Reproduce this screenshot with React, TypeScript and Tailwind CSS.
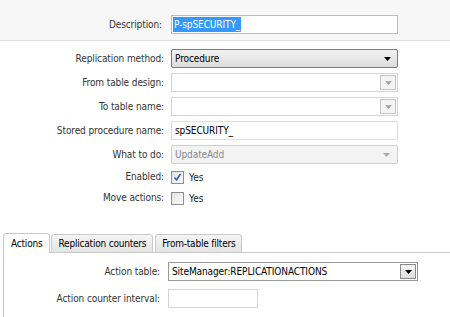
import React from "react";

const font = { fontFamily: '"DejaVu Sans Condensed", Tahoma, "Liberation Sans", sans-serif' };

const Caret = ({ color = "#000" }: { color?: string }) => (
  <svg width="7" height="4" viewBox="0 0 7 4">
    <path d="M0 0h7L3.5 4z" fill={color} />
  </svg>
);

const Label = ({ children }: { children: React.ReactNode }) => (
  <div className="text-right text-[10px] tracking-[-0.1px] text-[#333] leading-none">{children}</div>
);

const ComboEmpty = () => (
  <div className="h-[19px] w-[227px] flex border border-[#d4d4d4] bg-white">
    <div className="flex-1" />
    <div className="w-[16px] bg-[#f4f4f4] flex items-center justify-center m-[1px] border border-[#c4c4c4]">
      <Caret color="#a8a8a8" />
    </div>
  </div>
);

const Check = ({ checked }: { checked?: boolean }) => (
  <div className="flex items-center gap-[5px]">
    <div className="w-[13px] h-[13px] border border-[#8f8f8f] bg-gradient-to-br from-[#e0e0e0] to-white flex items-center justify-center">
      {checked && (
        <svg width="9" height="9" viewBox="0 0 9 9">
          <path d="M1.5 4.5l2 2.5 4-6" stroke="#3a5fb0" strokeWidth="1.6" fill="none" />
        </svg>
      )}
    </div>
    <span className="text-[10px] text-[#222]">Yes</span>
  </div>
);

const tabText = "text-[10px] tracking-[-0.2px] text-black";

export default function App() {
  return (
    <div className="w-[450px] h-[317px] bg-white overflow-hidden" style={font}>
      <div className="h-[41px] bg-[#f7f7f7] border-b border-[#e2e2e2] pt-[15px]">
        <div className="grid grid-cols-[162px_227px] gap-x-[9px] items-center">
          <Label>Description:</Label>
          <div className="h-[19px] border border-[#9cc3ec] bg-white flex items-center px-[1px]">
            <span className="bg-[#3399ff] text-white text-[10px] tracking-[-0.1px] leading-[15px] px-[1px]">P-spSECURITY_</span>
          </div>
        </div>
      </div>

      <div className="grid grid-cols-[164px_227px] gap-x-[7px] gap-y-[5px] items-center mt-[8px]">
        <Label>Replication method:</Label>
        <div className="h-[19px] rounded-[2px] border border-[#7a7a7a] bg-gradient-to-b from-[#f2f2f2] to-[#dcdcdc] flex items-center justify-between pl-[3px] pr-[6px]">
          <span className="text-[10px] tracking-[-0.1px] text-black">Procedure</span>
          <Caret />
        </div>

        <Label>From table design:</Label>
        <ComboEmpty />

        <Label>To table name:</Label>
        <ComboEmpty />

        <Label>Stored procedure name:</Label>
        <div className="h-[19px] border border-[#dedede] bg-white flex items-center px-[3px]">
          <span className="text-[10px] tracking-[-0.1px] text-black">spSECURITY_</span>
        </div>

        <Label>What to do:</Label>
        <div className="h-[19px] rounded-[2px] border border-[#cfcfcf] bg-[#f3f3f3] flex items-center justify-between pl-[3px] pr-[7px]">
          <span className="text-[10px] tracking-[-0.1px] text-[#8a8a8a]">UpdateAdd</span>
          <Caret color="#aaa" />
        </div>

        <div className="h-[16px] flex items-center justify-end"><Label>Enabled:</Label></div>
        <Check checked />

        <div className="h-[16px] flex items-center justify-end"><Label>Move actions:</Label></div>
        <Check />
      </div>

      <div className="mt-[27px] flex items-end pl-[3px] h-[20px]">
        <div className={`h-[20px] px-[7px] border border-b-0 border-[#c8c8c8] bg-white rounded-t-[3px] flex items-center relative z-10 ${tabText}`}>
          Actions
        </div>
        <div className={`h-[19px] px-[6px] ml-[1px] border border-[#c8c8c8] bg-gradient-to-b from-[#f5f5f5] to-[#e4e4e4] rounded-t-[3px] flex items-center ${tabText}`}>
          Replication counters
        </div>
        <div className={`h-[19px] px-[6px] ml-[2px] border border-[#c8c8c8] bg-gradient-to-b from-[#f5f5f5] to-[#e4e4e4] rounded-t-[3px] flex items-center ${tabText}`}>
          From-table filters
        </div>
        <div className="flex-1 border-b border-[#c8c8c8]" />
      </div>
      <div className="ml-[3px] border-l border-t border-[#c8c8c8] -mt-[1px] h-[80px] bg-white">
        <div className="grid grid-cols-[156px_250px] gap-x-[8px] gap-y-[8px] items-center mt-[9px]">
          <Label>Action table:</Label>
          <div className="h-[19px] border border-[#9a9a9a] bg-white flex items-center justify-between pl-[3px] pr-[1px]">
            <span className="text-[10px] tracking-[-0.1px] text-black">SiteManager:REPLICATIONACTIONS</span>
            <div className="w-[16px] h-[15px] border border-[#8a8a8a] bg-gradient-to-b from-[#f4f4f4] to-[#dedede] flex items-center justify-center">
              <Caret />
            </div>
          </div>
          <Label>Action counter interval:</Label>
          <div className="h-[19px] w-[90px] border border-[#d4d4d4] bg-white" />
        </div>
      </div>
    </div>
  );
}
